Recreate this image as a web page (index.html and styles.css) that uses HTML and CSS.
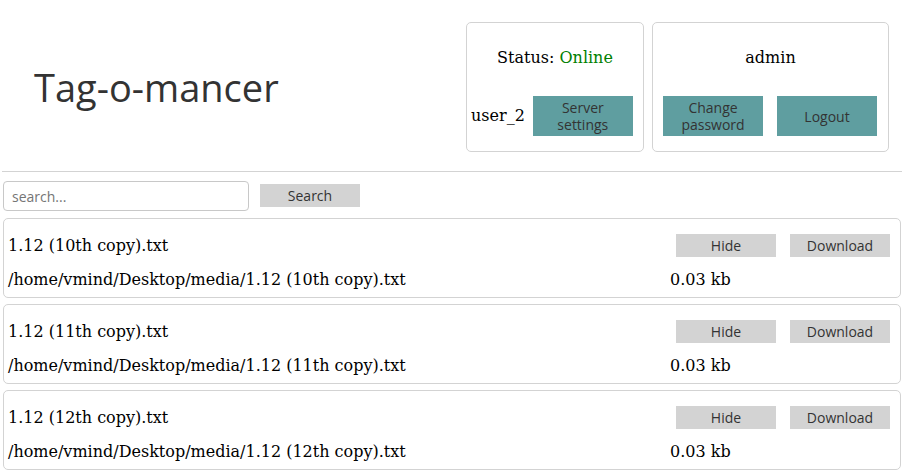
FILE: index.html
```html
<!DOCTYPE html>
<html>
<head>
<meta charset="utf-8">
<link rel="stylesheet" href="styles.css">
</head>
<body>
<div class="page">
  <header class="header">
    <h1 class="title">Tag-o-mancer</h1>
    <div class="panels">
      <div class="panel panel-status">
        <div class="panel-title">Status:&nbsp;<span class="online">Online</span></div>
        <div class="panel-row panel-row-status">
          <span class="user">user_2</span>
          <button class="btn btn-teal">Server<br>settings</button>
        </div>
      </div>
      <div class="panel panel-admin">
        <div class="panel-title">admin</div>
        <div class="panel-row panel-row-admin">
          <button class="btn btn-teal">Change<br>password</button>
          <button class="btn btn-teal">Logout</button>
        </div>
      </div>
    </div>
  </header>
  <div class="search-row">
    <input class="search-input" type="text" placeholder="search...">
    <button class="btn btn-gray btn-search">Search</button>
  </div>
  <div class="list">
    <div class="card">
      <div class="name">1.12 (10th copy).txt</div>
      <div class="actions"><button class="btn btn-gray">Hide</button><button class="btn btn-gray">Download</button></div>
      <div class="path">/home/vmind/Desktop/media/1.12 (10th copy).txt</div>
      <div class="size">0.03 kb</div>
    </div>
    <div class="card">
      <div class="name">1.12 (11th copy).txt</div>
      <div class="actions"><button class="btn btn-gray">Hide</button><button class="btn btn-gray">Download</button></div>
      <div class="path">/home/vmind/Desktop/media/1.12 (11th copy).txt</div>
      <div class="size">0.03 kb</div>
    </div>
    <div class="card">
      <div class="name">1.12 (12th copy).txt</div>
      <div class="actions"><button class="btn btn-gray">Hide</button><button class="btn btn-gray">Download</button></div>
      <div class="path">/home/vmind/Desktop/media/1.12 (12th copy).txt</div>
      <div class="size">0.03 kb</div>
    </div>
  </div>
</div>
</body>
</html>
```

FILE: styles.css
```css
html, body {
  margin: 0;
  padding: 0;
  background: #fff;
}
body {
  font-family: "DejaVu Serif", serif;
  font-size: 16px;
  color: #000;
}
.page {
  padding: 0 2px;
}
.header {
  display: flex;
  align-items: center;
  justify-content: space-between;
  padding: 22px 13px 19px 32px;
  border-bottom: 1px solid #d3d3d3;
}
.title {
  margin: 0;
  font-family: "Open Sans", sans-serif;
  font-weight: 400;
  font-size: 38px;
  color: #333;
  line-height: 50px;
}
.panels {
  display: flex;
  gap: 8px;
}
.panel {
  border: 1px solid #d3d3d3;
  border-radius: 5px;
  display: flex;
  flex-direction: column;
  padding: 0 0 15px;
}
.panel-status { width: 176px; }
.panel-admin { width: 235px; }
.panel-title {
  height: 68px;
  display: flex;
  align-items: center;
  justify-content: center;
}
.online { color: #008000; }
.panel-row {
  margin-top: 5px;
  display: flex;
  align-items: center;
}
.panel-row-status {
  justify-content: flex-start;
  padding-left: 4px;
  gap: 8px;
}
.panel-row-admin {
  justify-content: flex-start;
  padding-left: 10px;
  gap: 14px;
}
.user { line-height: 20px; }
.btn {
  font-family: "Open Sans", sans-serif;
  font-size: 14px;
  line-height: 17px;
  color: #333;
  border: none;
  border-radius: 0;
  padding: 0;
  width: 100px;
  margin: 0;
}
.btn-teal {
  background: #5f9ea0;
  height: 40px;
}
.btn-gray {
  background: #d3d3d3;
  height: 23px;
}
.search-row {
  display: flex;
  align-items: flex-start;
  gap: 11px;
  padding: 9px 1px 7px;
}
.btn-search {
  margin-top: 3px;
}
.search-input {
  box-sizing: border-box;
  width: 246px;
  height: 30px;
  border: 1px solid #c8c8c8;
  border-radius: 4px;
  padding: 0 8px;
  font-family: "Open Sans", sans-serif;
  font-size: 14px;
  margin: 0;
  outline: none;
}
.search-input::placeholder { color: #757575; }
.list {
  padding: 0 1px;
  display: flex;
  flex-direction: column;
  gap: 6px;
}
.card {
  border: 1px solid #d3d3d3;
  border-radius: 5px;
  display: grid;
  grid-template-columns: 1fr 220px;
  grid-template-rows: 23px 22px;
  row-gap: 11px;
  padding: 15px 10px 7px 4px;
  align-items: center;
}
.actions {
  display: flex;
  justify-content: flex-end;
  gap: 14px;
}
```
